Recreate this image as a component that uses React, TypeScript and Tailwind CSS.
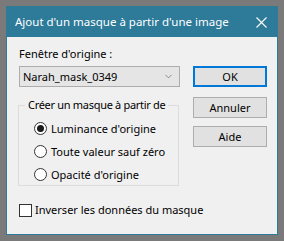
import { ChevronDown } from "lucide-react";

const font = "font-['Noto_Sans','Liberation_Sans',sans-serif]";

function Radio({ label, checked }: { label: string; checked?: boolean }) {
  return (
    <div className="flex h-[23px] items-center gap-[4px] whitespace-nowrap">
      <span className="flex h-[13px] w-[13px] shrink-0 items-center justify-center rounded-full border border-[#333] bg-white">
        {checked && <span className="h-[7px] w-[7px] rounded-full bg-[#1a1a1a]" />}
      </span>
      <span>{label}</span>
    </div>
  );
}

function Button({ label, primary }: { label: string; primary?: boolean }) {
  return (
    <button
      className={`flex h-[21px] w-[74px] items-center justify-center bg-[#e1e1e1] text-[11px] text-black ${
        primary ? "border-2 border-[#0078d7]" : "border border-[#adadad]"
      }`}
    >
      {label}
    </button>
  );
}

export default function App() {
  return (
    <div className={`h-[241px] w-[284px] bg-[#7a7a7a] p-[6px] ${font}`}>
      <div className="flex h-[229px] w-[272px] flex-col border border-[#2d7a99] bg-[#f0f0f0]">
        <div className="flex h-[30px] items-center justify-between whitespace-nowrap bg-[#2d7a99] pl-[8px] pr-[10px] text-[11.5px] text-white">
          <span>Ajout d'un masque à partir d'une image</span>
          <svg width="11" height="11" viewBox="0 0 11 11">
            <path d="M0.5 0.5 L10.5 10.5 M10.5 0.5 L0.5 10.5" stroke="white" strokeWidth="1.1" />
          </svg>
        </div>
        <div className="flex flex-1 pl-[11px] pr-[10px] text-[11px] leading-[16px] text-black">
          <div className="flex w-[162px] flex-col whitespace-nowrap">
            <div className="mt-[9px] h-[16px] pl-[1px]">Fenêtre d'origine :</div>
            <div className="mt-[4px] ml-[1px] flex h-[21px] items-center justify-between border border-[#adadad] bg-[#e5e5e5] pl-[3px] pr-[5px]">
              <span>Narah_mask_0349</span>
              <ChevronDown size={11} strokeWidth={1.3} className="text-[#555]" />
            </div>
            <fieldset className="mt-[11px] h-[88px] w-[161px] min-w-0 border border-[#dcdcdc]">
              <legend className="ml-[6px] px-[3px] leading-[14px] tracking-[-0.3px]">Créer un masque à partir de</legend>
              <div className="mt-[5px] flex flex-col pl-[15px]">
                <Radio label="Luminance d'origine" checked />
                <Radio label="Toute valeur sauf zéro" />
                <Radio label="Opacité d'origine" />
              </div>
            </fieldset>
            <div className="mt-[16px] ml-[1px] flex items-center gap-[3px]">
              <span className="h-[13px] w-[13px] shrink-0 border border-[#333] bg-white" />
              <span>Inverser les données du masque</span>
            </div>
          </div>
          <div className="ml-auto flex w-[74px] flex-col">
            <div className="mt-[29px]">
              <Button label="OK" primary />
            </div>
            <div className="mt-[10px]">
              <Button label="Annuler" />
            </div>
            <div className="mt-[8px]">
              <Button label="Aide" />
            </div>
          </div>
        </div>
      </div>
    </div>
  );
}
